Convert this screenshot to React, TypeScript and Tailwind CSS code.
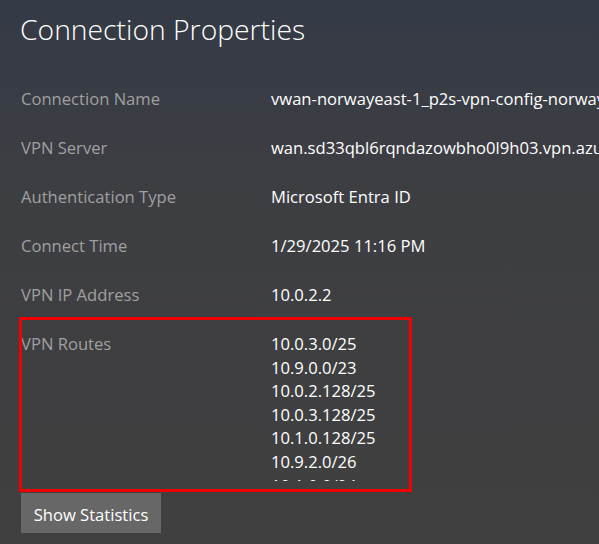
import React from "react";

const rows: [string, string][] = [
  ["Connection Name", "vwan-norwayeast-1_p2s-vpn-config-norwayeast"],
  ["VPN Server", "wan.sd33qbl6rqndazowbho0l9h03.vpn.azure.com"],
  ["Authentication Type", "Microsoft Entra ID"],
  ["Connect Time", "1/29/2025 11:16 PM"],
  ["VPN IP Address", "10.0.2.2"],
];

const routes = [
  "10.0.3.0/25",
  "10.9.0.0/23",
  "10.0.2.128/25",
  "10.0.3.128/25",
  "10.1.0.128/25",
  "10.9.2.0/26",
  "10.1.0.0/24",
  "10.2.0.0/24",
];

export default function App() {
  return (
    <div
      className="relative w-[599px] h-[544px] overflow-hidden bg-gradient-to-b from-[#343a46] via-[#3d3e42] via-35% to-[#404040] text-white"
      style={{ fontFamily: '"Open Sans", "Noto Sans", sans-serif' }}
    >
      <h1 className="pl-[20px] pt-[10px] h-[87px] text-[28.3px] leading-[38px] font-light">
        Connection Properties
      </h1>
      <div className="flex flex-col pl-[21px]">
        {rows.map(([k, v]) => (
          <div key={k} className="flex h-[49px] text-[16.6px] leading-[24px]">
            <div className="w-[250px] shrink-0 text-[#a0a0a0]">{k}</div>
            <div className="whitespace-nowrap">{v}</div>
          </div>
        ))}
        <div className="relative flex h-[161px] text-[16.6px] leading-[23.6px]">
          <div className="w-[250px] shrink-0 text-[#a0a0a0]">VPN Routes</div>
          <div className="h-[149px] overflow-hidden">
            {routes.map((r) => (
              <div key={r}>{r}</div>
            ))}
          </div>
          <div className="absolute left-[-2px] top-[-15px] w-[393px] h-[175px] border-[3px] border-[#f00000]" />
        </div>
        <div>
          <button className="w-[140px] h-[40px] pt-[3px] bg-[#676767] text-[16.6px] leading-[24px] text-white">
            Show Statistics
          </button>
        </div>
      </div>
    </div>
  );
}
